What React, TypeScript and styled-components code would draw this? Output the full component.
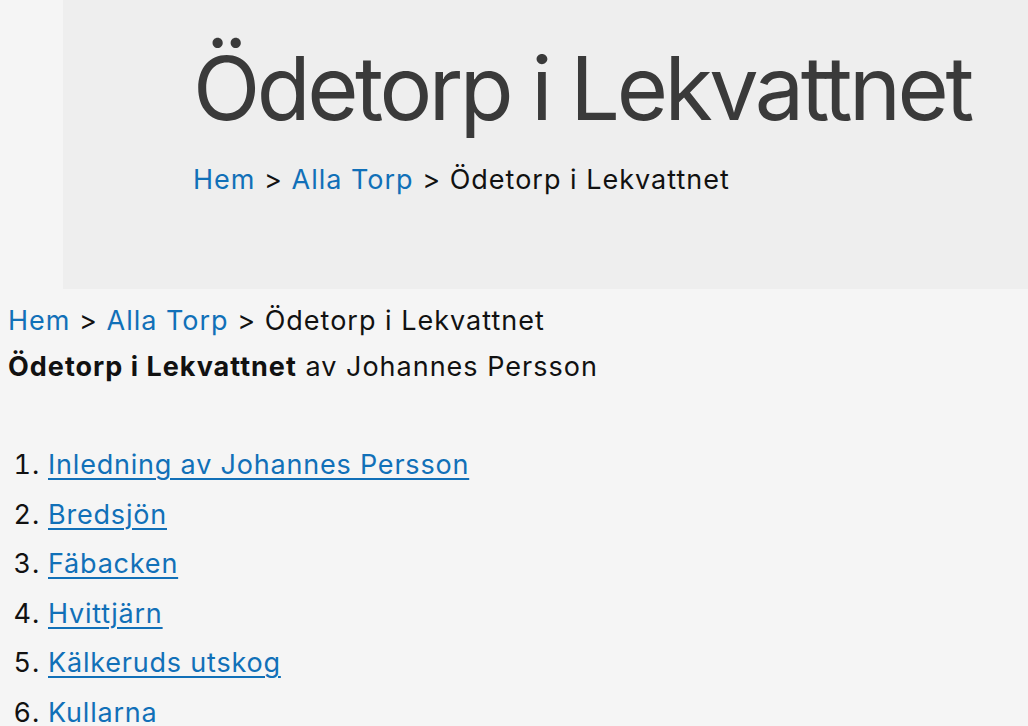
import React from 'react'
import styled, { createGlobalStyle } from 'styled-components'

const GlobalStyle = createGlobalStyle`
  body {
    margin: 0;
    background: #f5f5f5;
    font-family: Inter, 'Liberation Sans', Arial, sans-serif;
    color: #111;
  }
`

const Header = styled.header`
  margin-left: 63px;
  height: 289px;
  padding-left: 130px;
  background: #eeeeee;
  box-sizing: border-box;
  overflow: hidden;
`

const Title = styled.h1`
  margin: 0;
  padding-top: 33px;
  font-weight: 400;
  font-size: 88px;
  line-height: 110px;
  letter-spacing: -3.5px;
  color: #3a3a3a;
  white-space: nowrap;
`

const Crumbs = styled.nav<{ $top?: number }>`
  margin-top: ${p => p.$top ?? 0}px;
  font-size: 27px;
  line-height: 46px;
  letter-spacing: 1px;
  white-space: nowrap;
`

const CrumbLink = styled.a`
  color: #1170b8;
  text-decoration: none;
`

const Main = styled.main`
  padding: 9px 8px 0;
`

const Byline = styled.p`
  margin: 0;
  font-size: 27px;
  line-height: 46px;
  letter-spacing: 1px;
`

const List = styled.ol`
  margin: 50px 0 0;
  padding-left: 40px;
  font-size: 27px;
  line-height: 49.5px;
  letter-spacing: 0.8px;
`

const ItemLink = styled.a`
  color: #1170b8;
  text-decoration: underline;
  text-decoration-thickness: 2px;
  text-underline-offset: 4px;
`

const chapters = [
  'Inledning av Johannes Persson',
  'Bredsjön',
  'Fäbacken',
  'Hvittjärn',
  'Kälkeruds utskog',
  'Kullarna'
]

function Breadcrumb({ top }: { top?: number }) {
  return (
    <Crumbs $top={top}>
      <CrumbLink href="#">Hem</CrumbLink> &gt; <CrumbLink href="#">Alla Torp</CrumbLink> &gt; Ödetorp i Lekvattnet
    </Crumbs>
  )
}

export default function App() {
  return (
    <>
      <GlobalStyle />
      <Header>
        <Title>Ödetorp i Lekvattnet</Title>
        <Breadcrumb top={14} />
      </Header>
      <Main>
        <Breadcrumb />
        <Byline>
          <strong>Ödetorp i Lekvattnet</strong> av Johannes Persson
        </Byline>
        <List>
          {chapters.map(c => (
            <li key={c}>
              <ItemLink href="#">{c}</ItemLink>
            </li>
          ))}
        </List>
      </Main>
    </>
  )
}
